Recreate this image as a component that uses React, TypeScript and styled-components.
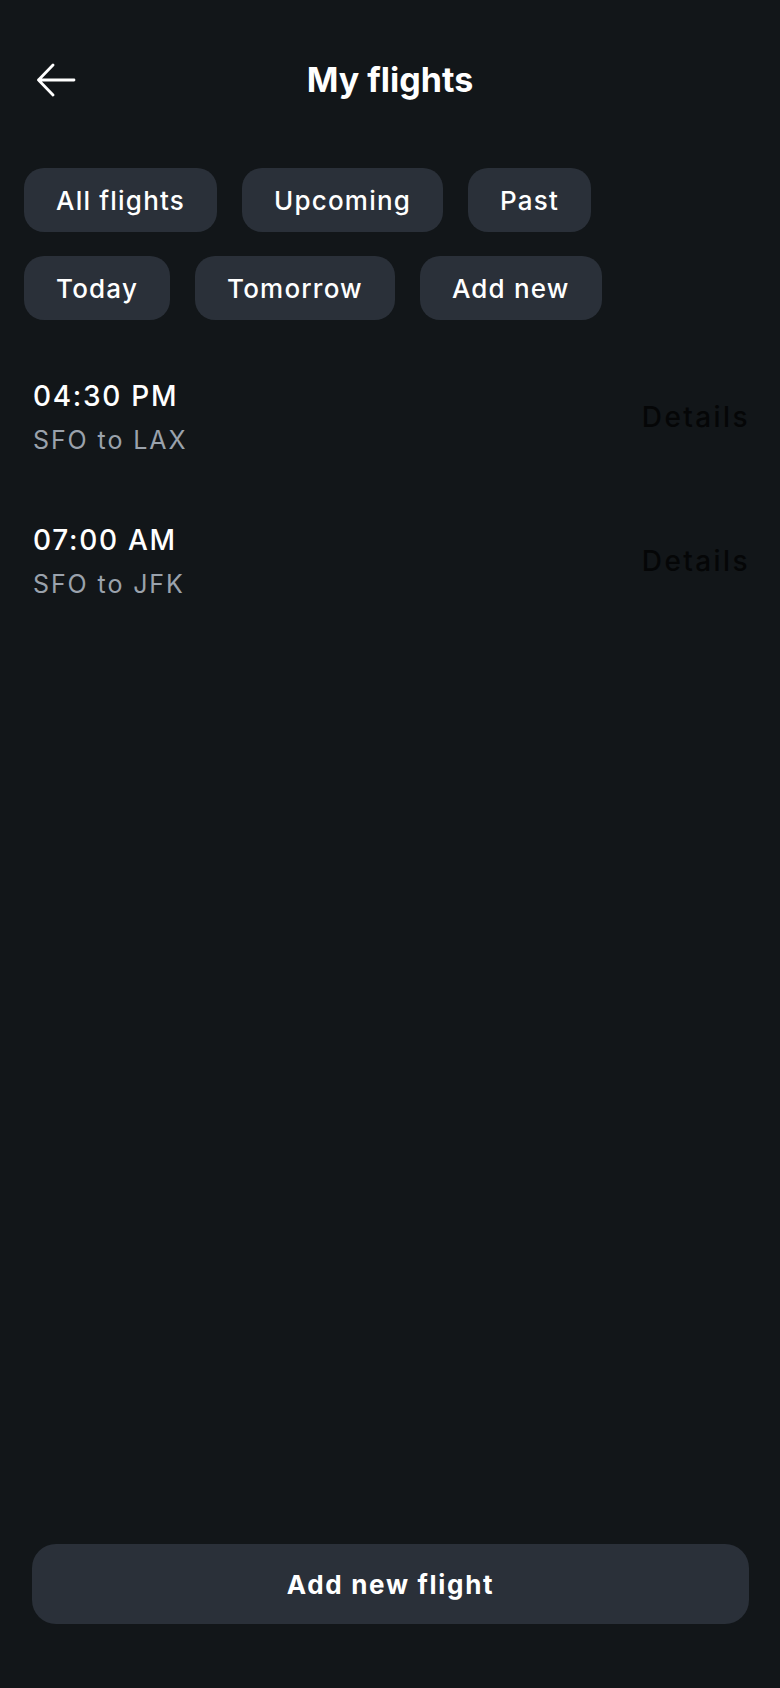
import React, { FC } from "react";
import styled, { createGlobalStyle } from "styled-components";

interface iFlight {
  id: number;
  time: string;
  route: string;
}

const chipRows: string[][] = [
  ["All flights", "Upcoming", "Past"],
  ["Today", "Tomorrow", "Add new"],
];

const flights: iFlight[] = [
  { id: 1, time: "04:30 PM", route: "SFO to LAX" },
  { id: 2, time: "07:00 AM", route: "SFO to JFK" },
];

const BackArrow: FC = () => (
  <svg width="40" height="34" viewBox="0 0 40 34" fill="none">
    <path
      d="M1.5 17H37M16 2L1.5 17L16 32"
      stroke="#ffffff"
      strokeWidth="2.8"
      strokeLinecap="round"
      strokeLinejoin="round"
    />
  </svg>
);

const App = () => {
  return (
    <>
      <GlobalStyle />
      <Page>
        <Header>
          <BackButton aria-label="Back">
            <BackArrow />
          </BackButton>
          <Title>My flights</Title>
          <span />
        </Header>

        <Chips>
          {chipRows.map((row, i) => (
            <ChipRow key={i}>
              {row.map((label) => (
                <Chip key={label}>{label}</Chip>
              ))}
            </ChipRow>
          ))}
        </Chips>

        <List>
          {flights.map((f) => (
            <Row key={f.id}>
              <Info>
                <Time>{f.time}</Time>
                <Route>{f.route}</Route>
              </Info>
              <Details>Details</Details>
            </Row>
          ))}
        </List>

        <Spacer />

        <AddButton>Add new flight</AddButton>
      </Page>
    </>
  );
};

export default App;

const GlobalStyle = createGlobalStyle`
  html, body {
    margin: 0;
    padding: 0;
    background: #121619;
  }
  body {
    font-family: Inter, "Liberation Sans", sans-serif;
    color: #ffffff;
  }
  * {
    box-sizing: border-box;
  }
`;

const Page = styled.div`
  min-height: 1688px;
  display: flex;
  flex-direction: column;
  background: #121619;
`;

const Header = styled.div`
  display: grid;
  grid-template-columns: 1fr auto 1fr;
  align-items: center;
  height: 60px;
  margin-top: 50px;
  padding: 0 37px;
`;

const BackButton = styled.button`
  justify-self: start;
  display: flex;
  align-items: center;
  padding: 0;
  border: 0;
  background: none;
  cursor: pointer;
`;

const Title = styled.h1`
  margin: 0;
  font-size: 34px;
  font-weight: 700;
  line-height: 44px;
  color: #ffffff;
`;

const Chips = styled.div`
  display: flex;
  flex-direction: column;
  gap: 24px;
  padding: 0 24px;
  margin-top: 58px;
`;

const ChipRow = styled.div`
  display: flex;
  gap: 25px;
`;

const Chip = styled.button`
  height: 64px;
  padding: 0 32px;
  border: 0;
  border-radius: 20px;
  background: #2a3039;
  color: #ffffff;
  font-family: Inter, "Liberation Sans", sans-serif;
  font-size: 26px;
  font-weight: 500;
  letter-spacing: 1.2px;
  cursor: pointer;
`;

const List = styled.div`
  display: flex;
  flex-direction: column;
  margin-top: 25px;
  padding: 0 30px 0 33px;
`;

const Row = styled.div`
  display: flex;
  align-items: center;
  justify-content: space-between;
  padding: 33px 0;
`;

const Info = styled.div`
  display: flex;
  flex-direction: column;
  gap: 10px;
`;

const Time = styled.div`
  font-size: 28px;
  font-weight: 500;
  line-height: 36px;
  letter-spacing: 1.7px;
  color: #ffffff;
`;

const Route = styled.div`
  font-size: 25px;
  font-weight: 400;
  line-height: 32px;
  letter-spacing: 1.9px;
  color: #9aa2ac;
`;

const Details = styled.div`
  font-size: 28px;
  font-weight: 500;
  line-height: 36px;
  letter-spacing: 2.4px;
  color: #050607;
`;

const Spacer = styled.div`
  flex: 1;
`;

const AddButton = styled.button`
  align-self: flex-start;
  width: 717px;
  height: 80px;
  margin: 0 0 64px 32px;
  border: 0;
  border-radius: 24px;
  background: #2a3039;
  color: #ffffff;
  font-family: Inter, "Liberation Sans", sans-serif;
  font-size: 26px;
  font-weight: 700;
  letter-spacing: 1.7px;
  cursor: pointer;
`;
